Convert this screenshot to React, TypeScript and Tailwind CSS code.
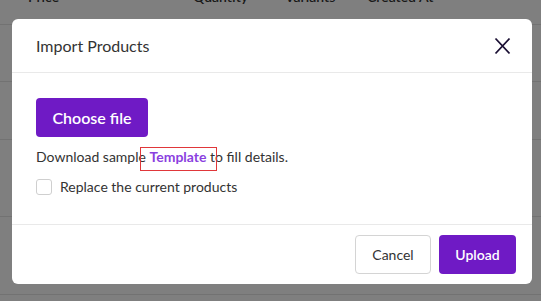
import React from "react";

export default function App() {
  return (
    <div className="relative w-[541px] h-[301px] overflow-hidden bg-white" style={{ fontFamily: "Lato, 'Open Sans', sans-serif" }}>
      {/* background page */}
      <div className="flex flex-col">
        <div className="h-[25px] border-b border-[#e5e5e5] text-[14px] font-semibold text-[#333] relative">
          <span className="absolute left-[28px] top-[-14px]">Price</span>
          <span className="absolute left-[193px] top-[-14px]">Quantity</span>
          <span className="absolute left-[285px] top-[-14px]">Variants</span>
          <span className="absolute left-[367px] top-[-14px]">Created At</span>
        </div>
        <div className="h-[57px] border-b border-[#e5e5e5]" />
        <div className="h-[58px] border-b border-[#e5e5e5]" />
        <div className="h-[77px] border-b border-[#e5e5e5]" />
        <div className="h-[78px] border-b border-[#e5e5e5]" />
      </div>
      <div className="absolute inset-0 bg-black/50" />
      {/* modal */}
      <div className="absolute left-[12px] top-[19px] w-[520px] h-[265px] bg-white rounded-[6px] flex flex-col text-[#333]">
        <div className="h-[54px] border-b border-[#e9e9e9] flex items-center justify-between pl-[24px] pr-[21px]">
          <span className="text-[16px]">Import Products</span>
          <svg width="17" height="18" viewBox="0 0 17 18" className="text-[#1a0f33]">
            <path d="M1.5 1.5 L15.5 16.5 M15.5 1.5 L1.5 16.5" stroke="currentColor" strokeWidth="1.8" fill="none" />
          </svg>
        </div>
        <div className="flex-1 flex flex-col pl-[24px] pt-[25px]">
          <button className="w-[112px] h-[39px] bg-[#6f1ac5] text-white text-[16px] font-semibold rounded-[4px]">Choose file</button>
          <p className="mt-[8px] text-[14px] leading-[24px]">
            Download sample{" "}
            <span className="relative font-bold text-[#8b3fe0]">
              Template
              <span className="absolute left-[-10px] right-[-11px] top-[-1px] h-[24px] border-[1.5px] border-[#e0373a]" />
            </span>
            {" "}to fill details.
          </p>
          <label className="mt-[7px] flex items-center gap-[8px] text-[14px]">
            <span className="w-[16px] h-[16px] border border-[#cfcfcf] rounded-[3px] bg-white" />
            Replace the current products
          </label>
        </div>
        <div className="h-[60px] border-t border-[#e9e9e9] flex items-center justify-end gap-[8px] pr-[16px]">
          <button className="w-[76px] h-[39px] border border-[#d4d4d4] rounded-[4px] text-[14px] text-[#333] bg-white">Cancel</button>
          <button className="w-[77px] h-[39px] bg-[#6f1ac5] rounded-[4px] text-[14px] font-semibold text-white">Upload</button>
        </div>
      </div>
    </div>
  );
}
